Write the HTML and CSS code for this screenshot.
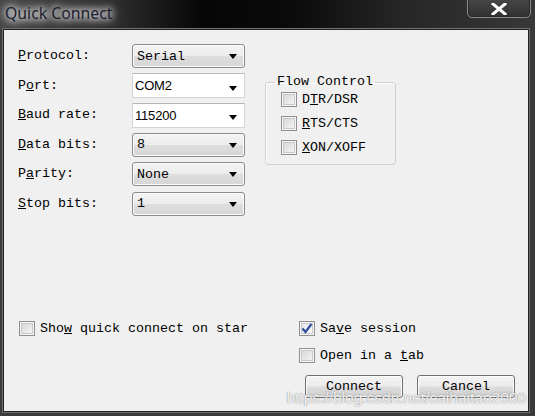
FILE: index.html
```html
<!DOCTYPE html>
<html>
<head>
<meta charset="utf-8">
<link rel="stylesheet" href="styles.css">
</head>
<body>
<div class="window">
  <div class="titlebar">
    <span class="title">Quick Connect</span>
    <div class="close">
      <svg width="16" height="12" viewBox="0 0 16 12"><path d="M2 1 L14 11 M14 1 L2 11" stroke="#fff" stroke-width="3" stroke-linecap="square"/></svg>
    </div>
  </div>
  <div class="client">
    <div class="top">
      <div class="form">
        <label class="lbl"><u>P</u>rotocol:</label>
        <div class="combo list"><span class="val mono">Serial</span><i class="arrow"></i></div>
        <label class="lbl">P<u>o</u>rt:</label>
        <div class="combo edit"><span class="val sans">COM2</span><i class="arrow"></i></div>
        <label class="lbl"><u>B</u>aud rate:</label>
        <div class="combo edit"><span class="val sans">115200</span><i class="arrow"></i></div>
        <label class="lbl"><u>D</u>ata bits:</label>
        <div class="combo list"><span class="val mono">8</span><i class="arrow"></i></div>
        <label class="lbl">P<u>a</u>rity:</label>
        <div class="combo list"><span class="val mono">None</span><i class="arrow"></i></div>
        <label class="lbl"><u>S</u>top bits:</label>
        <div class="combo list"><span class="val mono">1</span><i class="arrow"></i></div>
      </div>
      <fieldset class="group">
        <legend>Flow Control</legend>
        <div class="check"><span class="cb"></span><span>D<u>T</u>R/DSR</span></div>
        <div class="check"><span class="cb"></span><span><u>R</u>TS/CTS</span></div>
        <div class="check"><span class="cb"></span><span><u>X</u>ON/XOFF</span></div>
      </fieldset>
    </div>
    <div class="bottom">
      <div class="check left"><span class="cb"></span><span>Sho<u>w</u> quick connect on star</span></div>
      <div class="right">
        <div class="check"><span class="cb checked"><svg width="12" height="11" viewBox="0 0 12 11"><path d="M1.5 5.5 L4.5 9 L10.5 1" fill="none" stroke="#2f4f9a" stroke-width="2.2"/></svg></span><span>Sa<u>v</u>e session</span></div>
        <div class="check"><span class="cb"></span><span>Open in a <u>t</u>ab</span></div>
        <div class="buttons">
          <button class="btn">Connect</button>
          <button class="btn">Cancel</button>
        </div>
      </div>
    </div>
    <div class="watermark">https://blog.csdn.net/caihaitao2000</div>
  </div>
</div>
</body>
</html>
```

FILE: styles.css
```css
* { box-sizing: border-box; }
html, body { margin: 0; padding: 0; }
body {
  width: 535px;
  height: 416px;
  overflow: hidden;
  background: #3a3a3a;
}
.window {
  width: 535px;
  height: 416px;
  display: flex;
  flex-direction: column;
  background: #3b3b3b;
}
.titlebar {
  height: 29px;
  display: flex;
  align-items: flex-start;
  background: linear-gradient(to right, #464646 0%, #2c2c2c 22%, #060606 38%, #0b0b0b 55%, #262626 75%, #383838 100%);
}
.title {
  margin: 3px 0 0 5px;
  padding: 0 4px 0 0;
  font-family: "Noto Sans", "Open Sans", sans-serif;
  font-size: 15.8px;
  line-height: 20px;
  color: #1d2030;
  text-shadow: 0 0 6px #fff, 0 0 10px #fff, 0 0 14px rgba(255,255,255,.8);
}
.close {
  margin: -4px 4px 0 auto;
  width: 64px;
  height: 22px;
  border: 1px solid #8a8a8a;
  border-radius: 0 0 5px 5px;
  box-shadow: inset 0 0 0 1px #2a2a2a;
  background: linear-gradient(#4a4a4a, #303030);
  display: flex;
  align-items: center;
  justify-content: center;
  padding-top: 3px;
}
.client {
  position: relative;
  margin: 0 6px 0 3px;
  height: 383px;
  border: 1px solid #222;
  box-shadow: 0 0 0 1px #6e6e6e;
  background: #f0f0f0;
  display: flex;
  flex-direction: column;
  font-family: "Liberation Mono", "DejaVu Sans Mono", monospace;
  font-size: 13.33px;
  color: #000;
}
.top {
  display: flex;
  align-items: flex-start;
  padding: 14px 0 0 14px;
}
.form {
  display: grid;
  grid-template-columns: 114px 113px;
  grid-auto-rows: 24px;
  row-gap: 5.6px;
  align-items: center;
}
.lbl { line-height: 16px; }
.combo {
  position: relative;
  height: 24px;
  display: flex;
  align-items: center;
  padding-left: 4px;
}
.combo.list {
  border: 1px solid #8b8b8b;
  border-radius: 3px;
  background: linear-gradient(#f4f4f4 0%, #ececec 50%, #dedede 51%, #d6d6d6 100%);
  box-shadow: inset 0 0 0 1px #fbfbfb;
}
.combo.edit {
  height: 25px;
  border: 1px solid #d4d4d4;
  border-top-color: #b6b8bd;
  background: #fff;
  padding-left: 2px;
}
.val.mono { font-family: "Liberation Mono", monospace; font-size: 13.33px; }
.val.sans { font-family: "Liberation Sans", Arial, sans-serif; font-size: 13px; letter-spacing: -0.2px; }
.arrow {
  position: absolute;
  right: 7px;
  top: 50%;
  margin-top: -2px;
  width: 0;
  height: 0;
  border-left: 4px solid transparent;
  border-right: 4px solid transparent;
  border-top: 5px solid #000;
}
.combo.edit .arrow { margin-top: 0; }
.group {
  margin: 31px 0 0 20px;
  width: 131px;
  padding: 3px 0 9px 15px;
  border: 1px solid #d0d0d0;
  border-radius: 3px;
  box-shadow: inset 1px 1px 0 #fff;
  display: flex;
  flex-direction: column;
  gap: 9px;
}
.group legend {
  padding: 0 2px;
  margin-left: -6px;
  line-height: 14px;
}
.check {
  display: flex;
  align-items: center;
  gap: 5px;
  height: 15px;
  line-height: 15px;
}
.cb {
  flex: none;
  width: 16px;
  height: 15px;
  border: 1px solid #8f8f8f;
  background: linear-gradient(135deg, #d2d2d2 0%, #e6e6e6 50%, #f8f8f8 100%);
  box-shadow: inset 0 0 0 1px #f6f6f6, inset 0 0 0 2px #c9c9c9;
  display: flex;
  align-items: center;
  justify-content: center;
}
.cb.checked {
  background: linear-gradient(135deg, #e3e6ee 0%, #eef0f4 60%, #fafafa 100%);
}
.bottom {
  margin-top: auto;
  display: flex;
  align-items: flex-start;
  padding: 0 13px 13px 15px;
}
.right {
  margin-left: auto;
  width: 216px;
  display: flex;
  flex-direction: column;
  gap: 12px;
}
.buttons {
  display: flex;
  justify-content: flex-end;
  gap: 14px;
}
.btn {
  width: 98px;
  height: 23px;
  padding: 0;
  border: 1px solid #707070;
  border-radius: 3px;
  background: linear-gradient(#f3f3f3 0%, #ebebeb 48%, #dddddd 52%, #cfcfcf 100%);
  box-shadow: inset 0 0 0 1px #fcfcfc;
  font-family: "Liberation Mono", monospace;
  font-size: 13.33px;
  color: #000;
}
.watermark {
  position: absolute;
  right: 2px;
  bottom: 5px;
  font-family: "Liberation Sans", Arial, sans-serif;
  font-size: 15.5px;
  line-height: 16px;
  color: rgba(255,255,255,0.9);
  text-shadow: 0 0 1px rgba(90,90,90,0.7), 0 0 2px rgba(150,150,150,0.5);
  white-space: nowrap;
}
```
